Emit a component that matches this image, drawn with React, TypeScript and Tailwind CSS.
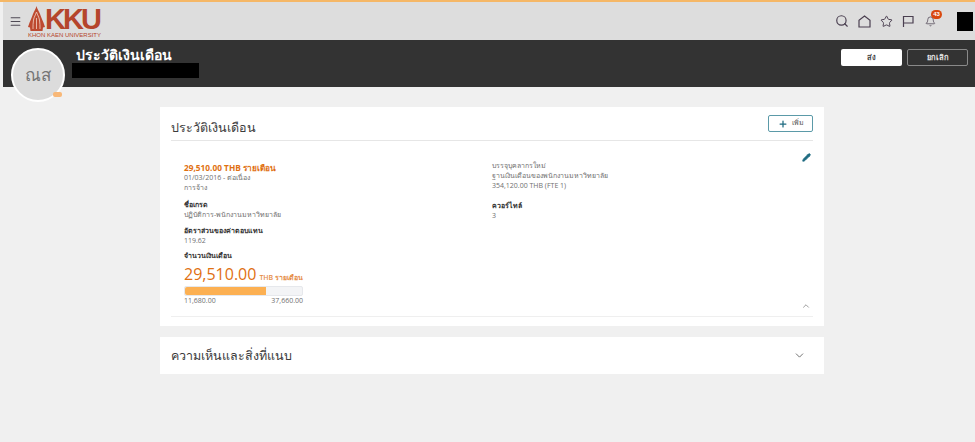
import { Menu, Search, Star, Bell, Plus, Pencil, ChevronUp, ChevronDown } from 'lucide-react';

const thai = "font-['Open_Sans','Noto_Sans','Liberation_Sans',sans-serif]";

function Logo() {
  return (
    <div className="relative ml-[6px] h-[38px] w-[75px] shrink-0">
      <div className="flex items-start">
        <svg width="17" height="26" viewBox="0 0 17 26" className="mt-[4px] shrink-0">
          <path d="M8.5 0C9 3 11 5 12 8C13 11 15 15 17 21L15 21.5L14.5 25H2.5L2 21.5L0 21C2 15 4 11 5 8C6 5 8 3 8.5 0Z" fill="#bd4a30" />
          <path d="M8.5 6C9.5 9 11 11 11.5 14C12 17 12 20 12 23M8.5 6C7.5 9 6 11 5.500 14C5 17 5 20 5 23" fill="none" stroke="#edc4b4" strokeWidth="0.9" />
          <path d="M8.5 12V23" stroke="#edc4b4" strokeWidth="0.9" />
        </svg>
        <div className="mt-[5px] font-['Liberation_Sans',sans-serif] text-[29px] leading-[24px] font-bold tracking-[-3px] text-[#b5452c]">
          KKU
        </div>
      </div>
      <span className="absolute left-0 top-[30px] whitespace-nowrap font-['Liberation_Sans',sans-serif] text-[6px] leading-[6px] text-[#b5452c]">
        KHON KAEN UNIVERSITY
      </span>
    </div>
  );
}

function Header() {
  return (
    <div className="flex h-[38px] items-center bg-[#dddddd] pl-[6px] pr-[2px]">
      <Menu size={13} strokeWidth={2} className="text-[#4f4a55]" />
      <Logo />
      <div className="ml-auto flex items-center text-[#4a3f50]">
        <Search size={14} strokeWidth={2} className="mr-[9px]" />
        <svg width="13" height="13" viewBox="0 0 13 13" fill="none" stroke="currentColor" strokeWidth="1.2" className="mr-[9px]">
          <path d="M6.5 1L12 5.2V12H1V5.2Z" />
        </svg>
        <Star size={13} strokeWidth={1.8} className="mr-[9px]" />
        <svg width="12" height="12" viewBox="0 0 12 12" fill="none" stroke="currentColor" strokeWidth="1.2" className="mr-[11px]">
          <path d="M1.5 12V1.5H11V8H1.5" />
        </svg>
        <div className="relative mr-[21px]">
          <Bell size={11} strokeWidth={1.6} />
          <span className="absolute left-[6px] top-[-6px] flex h-[9px] w-[11px] items-center justify-center rounded-full bg-[#d9480f] font-['Liberation_Sans',sans-serif] text-[6px] font-bold text-white">
            43
          </span>
        </div>
        <div className="h-[19px] w-[16px] bg-black" />
      </div>
    </div>
  );
}

function TitleBar() {
  return (
    <div className="relative flex h-[47px] items-start bg-[#333333] pl-[73px] pr-[7px]">
      <div className="pt-[6px]">
        <div className={`${thai} text-[14px] leading-[18px] font-bold text-white`}>ประวัติเงินเดือน</div>
        <div className="ml-[-4px] mt-[-1px] h-[15px] w-[127px] bg-black" />
      </div>
      <div className="ml-auto flex gap-[5px] pt-[9px]">
        <button className={`${thai} h-[17px] w-[61px] rounded-[2px] bg-white text-[7.5px] font-semibold text-[#444]`}>ส่ง</button>
        <button className={`${thai} h-[17px] w-[61px] rounded-[2px] border border-[#8a8a8a] text-[7.5px] font-semibold text-[#e8e8e8]`}>ยกเลิก</button>
      </div>
      <div className="absolute left-[8px] top-[8px] flex h-[54px] w-[54px] items-center justify-center rounded-full border-2 border-white bg-[#dcdcdc]">
        <span className={`${thai} text-[17px] text-[#757575]`}>ณส</span>
        <span className="absolute bottom-[3px] right-[1px] h-[5px] w-[9px] rounded-[2px] bg-[#f8b878]" />
      </div>
    </div>
  );
}

function Field({ label, value }: { label: string; value: string }) {
  return (
    <div>
      <div className="text-[7px] leading-[10px] font-bold text-[#333]">{label}</div>
      <div className="text-[7px] leading-[10px] text-[#6f6f6f]">{value}</div>
    </div>
  );
}

function SalaryCard() {
  return (
    <div className={`${thai} h-[219px] w-[664px] bg-white pl-[11px] pr-[11px]`}>
      <div className="flex h-[34px] items-center justify-between border-b border-[#e6e6e6]">
        <h2 className="pt-[10px] text-[12.5px] text-[#3c3c3c]">ประวัติเงินเดือน</h2>
        <button className="flex h-[17px] w-[45px] items-center justify-center gap-[4px] rounded-[2px] border border-[#5b9aa8] text-[7px] text-[#555]">
          <Plus size={10} strokeWidth={3} className="text-[#1d6a80]" />
          เพิ่ม
        </button>
      </div>
      <div className="relative h-[176px] border-b border-[#efefef] pl-[13px] pt-[21px]">
        <Pencil size={9} strokeWidth={2.5} fill="#1d6a80" className="absolute right-[2px] top-[12px] text-[#1d6a80]" />
        <ChevronUp size={10} strokeWidth={1.7} className="absolute bottom-[5px] right-[2px] text-[#777]" />
        <div className="flex">
          <div className="w-[308px]">
            <div className="text-[8.3px] leading-[11px] font-bold text-[#e07012]">29,510.00 THB รายเดือน</div>
            <div className="text-[7px] leading-[10px] text-[#6f6f6f]">01/03/2016 - ต่อเนื่อง</div>
            <div className="text-[7px] leading-[10px] text-[#6f6f6f]">การจ้าง</div>
            <div className="mt-[7px]">
              <Field label="ชื่อเกรด" value="ปฏิบัติการ-พนักงานมหาวิทยาลัย" />
            </div>
            <div className="mt-[6px]">
              <Field label="อัตราส่วนของค่าตอบแทน" value="119.62" />
            </div>
            <div className="mt-[5px] text-[7px] leading-[10px] font-bold text-[#333]">จำนวนเงินเดือน</div>
            <div className="mt-[1px] flex items-baseline gap-[3px] text-[#e07012]">
              <span className="text-[16px] leading-[24px]">29,510.00</span>
              <span className="text-[7px] font-semibold opacity-80">THB รายเดือน</span>
            </div>
            <div className="h-[10px] w-[119px] rounded-[2px] border border-[#e6e8ec] bg-[#f3f4f6]">
              <div className="h-full w-[81px] rounded-l-[2px] bg-[#fcb052]" />
            </div>
            <div className="flex w-[119px] justify-between text-[7px] leading-[10px] text-[#6f6f6f]">
              <span>11,680.00</span>
              <span>37,660.00</span>
            </div>
          </div>
          <div className="mt-[-1px]">
            <div className="text-[7px] leading-[10px] text-[#6f6f6f]">บรรจุบุคลากรใหม่</div>
            <div className="text-[7px] leading-[10px] text-[#6f6f6f]">ฐานเงินเดือนของพนักงานมหาวิทยาลัย</div>
            <div className="text-[7px] leading-[10px] text-[#6f6f6f]">354,120.00 THB (FTE 1)</div>
            <div className="mt-[10px]">
              <Field label="ควอร์ไทล์" value="3" />
            </div>
          </div>
        </div>
      </div>
    </div>
  );
}

function CommentsCard() {
  return (
    <div className={`${thai} mt-[11px] flex h-[37px] w-[664px] items-center justify-between bg-white pl-[11px] pr-[18px]`}>
      <h2 className="pt-[2px] text-[12.5px] text-[#3c3c3c]">ความเห็นและสิ่งที่แนบ</h2>
      <ChevronDown size={13} strokeWidth={1.7} className="text-[#666]" />
    </div>
  );
}

export default function App() {
  return (
    <div className="h-[442px] w-[975px] overflow-hidden bg-[#f0f0f0] pl-[3px]">
      <div className="ml-[-3px] h-[2px] bg-[#f5b766]" />
      <Header />
      <TitleBar />
      <div className="pl-[157px] pt-[20px]">
        <SalaryCard />
        <CommentsCard />
      </div>
    </div>
  );
}
